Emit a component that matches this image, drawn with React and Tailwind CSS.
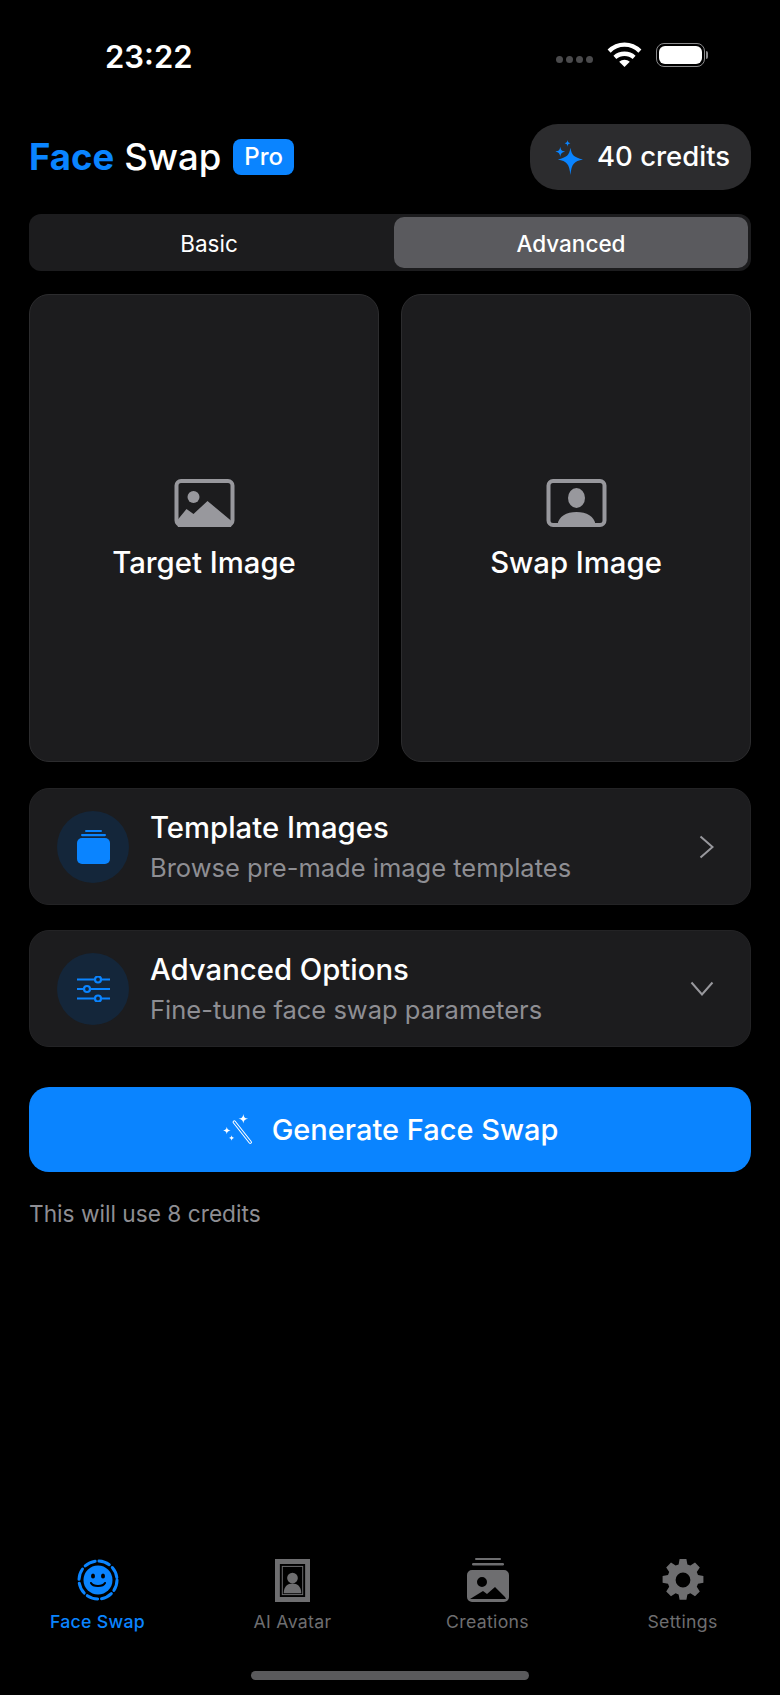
const Sparkles = ({ className }) => (
  <svg viewBox="0 0 30 36" className={className} fill="currentColor">
    <path d="M17 8c1.200 7.500 3.800 10.300 13 12-9.200 1.700-11.800 4.500-13 16-1.200-11.500-3.800-14.300-13-16 9.200-1.700 11.800-4.500 13-12z" />
    <path d="M6.500 7c.5 3.300 1.500 4.500 5 5-3.500.6-4.500 1.700-5 5.500C6 13.700 5 12.600 1.500 12c3.500-.5 4.500-1.700 5-5z" />
    <path d="M14 0c.3 2 .9 2.800 3 3.200-2.100.4-2.700 1.200-3 3.800-.3-2.600-.9-3.400-3-3.800 2.100-.4 2.700-1.200 3-3.200z" />
  </svg>
);

const LandscapeIcon = () => (
  <svg viewBox="0 0 60 48" className="w-[61px] h-[48px] text-[#98989d]" fill="currentColor">
    <rect x="2" y="2" width="56" height="44" rx="4.500" fill="none" stroke="currentColor" strokeWidth="4" />
    <circle cx="19" cy="18" r="6" />
    <path d="M3 41l9-11 7 5 14-13 24 20v4a3 3 0 0 1-3 3H6a3 3 0 0 1-3-3z" />
  </svg>
);

const PortraitIcon = () => (
  <svg viewBox="0 0 60 48" className="w-[61px] h-[48px] text-[#98989d]" fill="currentColor">
    <rect x="2" y="2" width="56" height="44" rx="4.500" fill="none" stroke="currentColor" strokeWidth="4" />
    <ellipse cx="30" cy="19" rx="8.500" ry="10" />
    <path d="M11 46c1-9 9-13 19-13s18 4 19 13z" />
  </svg>
);

const StackIcon = () => (
  <svg viewBox="0 0 33 34" className="w-[33px] h-[34px] text-[#0a84ff]" fill="currentColor">
    <rect x="8" y="0" width="17" height="2" rx="1" />
    <rect x="4" y="4" width="25" height="2.200" rx="1.100" />
    <rect x="0" y="8" width="33" height="26" rx="5" />
  </svg>
);

const SlidersIcon = () => (
  <svg viewBox="0 0 33 26" className="w-[33px] h-[26px] text-[#0a84ff]" fill="none" stroke="currentColor" strokeWidth="2.200">
    <path d="M0 3.500h18M24 3.500h9M0 13h7M13 13h20M0 22.500h18M24 22.500h9" />
    <circle cx="21" cy="3.500" r="3" />
    <circle cx="10" cy="13" r="3" />
    <circle cx="21" cy="22.500" r="3" />
  </svg>
);

const WandIcon = () => (
  <svg viewBox="0 0 30 30" className="w-[32px] h-[32px] text-white" fill="currentColor">
    <path d="M11.500 7.500l15 19" fill="none" stroke="currentColor" strokeWidth="3.200" strokeLinecap="round" />
    <path d="M11.500 7.500l15 19" fill="none" stroke="#0a84ff" strokeWidth="1.200" strokeLinecap="round" />
    <path d="M20 0c.4 3 1.400 4 4.500 4.500C21.400 5 20.400 6 20 9c-.4-3-1.400-4-4.500-4.500C18.600 4 19.600 3 20 0z" />
    <path d="M4.500 12c.3 2.300 1 3 3.500 3.500-2.500.5-3.200 1.200-3.500 3.500-.3-2.300-1-3-3.500-3.500 2.500-.5 3.200-1.200 3.500-3.500z" />
    <path d="M9 20c.2 1.500.8 2.100 2.500 2.500-1.700.4-2.300 1-2.500 2.500-.2-1.500-.8-2.100-2.500-2.500 1.700-.4 2.300-1 2.500-2.500z" />
  </svg>
);

const FaceTabIcon = () => (
  <svg viewBox="0 0 42 42" className="w-[42px] h-[42px] text-[#0a84ff]">
    <circle cx="21" cy="21" r="19" fill="none" stroke="currentColor" strokeWidth="3" strokeDasharray="11 4" strokeLinecap="round" />
    <circle cx="21" cy="21" r="14.500" fill="currentColor" />
    <ellipse cx="16" cy="17" rx="2" ry="2.600" fill="#000" />
    <ellipse cx="26" cy="17" rx="2" ry="2.600" fill="#000" />
    <path d="M14 24c2 4 12 4 14 0" fill="none" stroke="#000" strokeWidth="2" strokeLinecap="round" />
  </svg>
);

const AvatarTabIcon = () => (
  <svg viewBox="0 0 36 44" className="w-[35px] h-[43px] text-[#6e6e70]" fill="currentColor">
    <path fillRule="evenodd" d="M0 0h36v44H0zM5 5v34h26V5z" />
    <rect x="7.500" y="7.500" width="21" height="29" fill="none" stroke="currentColor" strokeWidth="1" />
    <circle cx="18" cy="19.500" r="5.500" />
    <path d="M9 35c0-7 4-10 9-10s9 3 9 10z" />
  </svg>
);

const CreationsTabIcon = () => (
  <svg viewBox="0 0 42 44" className="w-[42px] h-[44px] text-[#6e6e70]" fill="currentColor">
    <rect x="8" y="0" width="26" height="2" rx="1" />
    <rect x="5" y="5" width="32" height="2.400" rx="1.200" />
    <path fillRule="evenodd" d="M5 12h32a5 5 0 0 1 5 5v22a5 5 0 0 1-5 5H5a5 5 0 0 1-5-5V17a5 5 0 0 1 5-5zM15 19a5 5 0 1 0 0 10 5 5 0 0 0 0-10zM3 41h36l-1-2-10-10-8 7-4-3z" />
  </svg>
);

const GearTabIcon = () => (
  <svg viewBox="0 0 24 24" className="w-[48px] h-[48px] text-[#6e6e70]" fill="currentColor">
    <path fillRule="evenodd" d="M10.300 1.500h3.400l.5 2.700 1.500.6 2.300-1.500 2.400 2.400-1.500 2.300.6 1.500 2.700.5v3.400l-2.700.5-.6 1.500 1.500 2.300-2.400 2.400-2.300-1.500-1.500.6-.5 2.700h-3.400l-.5-2.700-1.500-.6-2.300 1.500-2.400-2.400 1.500-2.300-.6-1.500-2.700-.5v-3.400l2.700-.5.6-1.500-1.500-2.300 2.400-2.400 2.300 1.500 1.500-.6zM12 8.300a3.700 3.700 0 1 0 0 7.400 3.700 3.700 0 0 0 0-7.400z" />
  </svg>
);

const tabs = [
  { label: 'Face Swap', icon: <FaceTabIcon />, active: true },
  { label: 'AI Avatar', icon: <AvatarTabIcon /> },
  { label: 'Creations', icon: <CreationsTabIcon /> },
  { label: 'Settings', icon: <GearTabIcon /> },
];

const UploadCard = ({ icon, label }) => (
  <div className="flex-1 h-[468px] rounded-[20px] bg-[#1c1c1e] border border-[#2c2c2e] flex flex-col items-center justify-center gap-[19px] pt-[2px]">
    {icon}
    <div className="text-[29.300px] leading-[34px] font-medium text-white">{label}</div>
  </div>
);

const OptionRow = ({ icon, title, sub, action }) => (
  <div className="h-[117px] rounded-[20px] bg-[#1c1c1e] border border-[#232325] flex items-center pl-[27px] pr-[30px]">
    <div className="w-[72px] h-[72px] rounded-full bg-[#14263a] flex items-center justify-center shrink-0">{icon}</div>
    <div className="ml-[21px] flex-1">
      <div className="text-[29.300px] leading-[36px] font-medium text-white">{title}</div>
      <div className="text-[25.500px] leading-[32px] mt-[6px] text-[#8e8e93]">{sub}</div>
    </div>
    {action}
  </div>
);

export default function App() {
  return (
    <div className="w-[780px] h-[1695px] bg-black text-white flex flex-col font-['Inter','Noto_Sans',sans-serif] overflow-hidden">
      {/* status bar */}
      <div className="h-[124px] shrink-0 flex items-start justify-between pl-[105px] pr-[72px] pt-[38px]">
        <div className="text-[31px] leading-[38px] font-semibold">23:22</div>
        <div className="flex items-center gap-[14px] pt-[4px]">
          <div className="flex gap-[3px] mt-[10px]">
            <span className="w-[7px] h-[7px] rounded-full bg-[#4a4a4c]" />
            <span className="w-[7px] h-[7px] rounded-full bg-[#4a4a4c]" />
            <span className="w-[7px] h-[7px] rounded-full bg-[#4a4a4c]" />
            <span className="w-[7px] h-[7px] rounded-full bg-[#4a4a4c]" />
          </div>
          <svg viewBox="0 0 36 26" className="w-[35px] h-[25px]" fill="none" stroke="#fff" strokeWidth="4.500">
            <path d="M2 9.500c9-9 23-9 32 0" />
            <path d="M8 16c5.500-5 14.500-5 20 0" />
            <path d="M18 26l-5.500-5.500c3-2.800 8-2.800 11 0z" fill="#fff" stroke="none" />
          </svg>
          <div className="flex items-center">
            <div className="w-[49px] h-[24px] rounded-[8px] border border-[#8a8a8c] p-[2px]">
              <div className="w-full h-full rounded-[6px] bg-white" />
            </div>
            <div className="w-[2px] h-[8px] rounded-r bg-[#8a8a8c] ml-[1px]" />
          </div>
        </div>
      </div>

      <div className="px-[29px] flex flex-col">
        {/* header */}
        <div className="flex items-center justify-between h-[66px]">
          <div className="flex items-center">
            <span className="text-[36.500px] leading-[44px] font-bold text-[#0a84ff]">Face</span>
            <span className="text-[36.500px] leading-[44px] font-medium ml-[10px]">Swap</span>
            <span className="ml-[12px] h-[36px] px-[11px] rounded-[8px] bg-[#0a84ff] text-[24px] font-medium leading-[36px]">Pro</span>
          </div>
          <div className="h-[66px] w-[221px] rounded-[28px] bg-[#2c2c2e] flex items-center pl-[24px] gap-[14px]">
            <Sparkles className="w-[29px] h-[35px] text-[#0a84ff]" />
            <span className="text-[27.500px] font-medium">40 credits</span>
          </div>
        </div>

        {/* segmented control */}
        <div className="mt-[24px] h-[57px] rounded-[12px] bg-[#1c1c1e] flex p-[3px]">
          <div className="flex-1 flex items-center justify-center text-[22.500px] pr-[8px] pt-[2px]">Basic</div>
          <div className="flex-1 rounded-[10px] bg-[#5a5a5e] flex items-center justify-center text-[22.500px] font-medium pt-[2px]">Advanced</div>
        </div>

        {/* image pickers */}
        <div className="mt-[23px] flex gap-[22px]">
          <UploadCard icon={<LandscapeIcon />} label="Target Image" />
          <UploadCard icon={<PortraitIcon />} label="Swap Image" />
        </div>

        <div className="mt-[26px] flex flex-col gap-[25px]">
          <OptionRow
            icon={<StackIcon />}
            title="Template Images"
            sub="Browse pre-made image templates"
            action={
              <svg viewBox="0 0 15 24" className="w-[15px] h-[24px] mr-[6px] text-[#98989d]" fill="none" stroke="currentColor" strokeWidth="2">
                <path d="M1.500 1.500L13.500 12 1.500 22.500" />
              </svg>
            }
          />
          <OptionRow
            icon={<SlidersIcon />}
            title="Advanced Options"
            sub="Fine-tune face swap parameters"
            action={
              <svg viewBox="0 0 24 15" className="w-[24px] h-[15px] mr-[6px] text-[#98989d]" fill="none" stroke="currentColor" strokeWidth="2">
                <path d="M1.500 1.500L12 13.500 22.500 1.500" />
              </svg>
            }
          />
        </div>

        {/* generate */}
        <div className="mt-[40px] h-[85px] rounded-[20px] bg-[#0a84ff] flex items-center justify-center gap-[18px]">
          <WandIcon />
          <span className="text-[29px] font-medium">Generate Face Swap</span>
        </div>
        <div className="mt-[27px] text-[22.700px] leading-[30px] text-[#8e8e93]">This will use 8 credits</div>
      </div>

      {/* tab bar */}
      <div className="mt-auto shrink-0 flex flex-col items-center">
        <div className="w-full grid grid-cols-4">
          {tabs.map((tab) => (
            <div key={tab.label} className="flex flex-col items-center">
              <div className="h-[46px] flex items-center justify-center">{tab.icon}</div>
              <div className={`mt-[7px] text-[17.700px] leading-[24px] tracking-[0.3px] ${tab.active ? 'font-medium text-[#0a84ff]' : 'text-[#6e6e70]'}`}>{tab.label}</div>
            </div>
          ))}
        </div>
        <div className="mt-[37px] mb-[15px] w-[278px] h-[9px] rounded-full bg-[#5a5a5c]" />
      </div>
    </div>
  );
}
